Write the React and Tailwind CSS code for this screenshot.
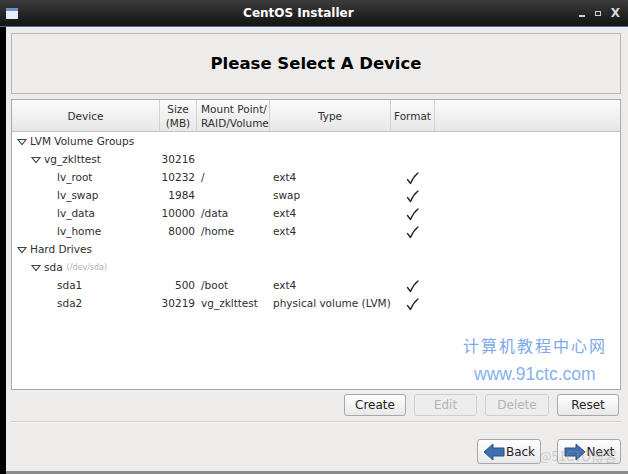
import React from "react";

const font = { fontFamily: '"DejaVu Sans", Verdana, sans-serif' };

const rows = [
    { level: 0, arrow: true, name: "LVM Volume Groups" },
    { level: 1, arrow: true, name: "vg_zklttest", size: "30216" },
    { level: 2, name: "lv_root", size: "10232", mount: "/", type: "ext4", fmt: true },
    { level: 2, name: "lv_swap", size: "1984", mount: "", type: "swap", fmt: true },
    { level: 2, name: "lv_data", size: "10000", mount: "/data", type: "ext4", fmt: true },
    { level: 2, name: "lv_home", size: "8000", mount: "/home", type: "ext4", fmt: true },
    { level: 0, arrow: true, name: "Hard Drives" },
    { level: 1, arrow: true, name: "sda", sub: "(/dev/sda)" },
    { level: 2, name: "sda1", size: "500", mount: "/boot", type: "ext4", fmt: true },
    { level: 2, name: "sda2", size: "30219", mount: "vg_zklttest", type: "physical volume (LVM)", fmt: true },
];

const indent = ["pl-[5px]", "pl-[19px]", "pl-[45px]"];

function Arrow() {
    return (
        <svg width="10" height="8" viewBox="0 0 10 8" className="mr-[3px] shrink-0">
            <path d="M1 1.5 L9 1.5 L5 6.5 Z" fill="none" stroke="#444" strokeWidth="1.1" />
        </svg>
    );
}

function Check() {
    return (
        <svg width="13" height="13" viewBox="0 0 13 13">
            <path d="M1.5 7.5 L4.5 11.5 Q7 5 12 1" fill="none" stroke="#1c2035" strokeWidth="1.3" strokeLinecap="round" strokeLinejoin="round" />
        </svg>
    );
}

function Button({ children, disabled, className = "" }) {
    return (
        <div
            className={`flex items-center justify-center rounded-[3px] border text-[12px] ${
                disabled
                    ? "border-[#cfcfcf] bg-[#ededed] text-[#b4b4b4]"
                    : "border-[#a8a8a8] bg-gradient-to-b from-[#ffffff] to-[#e8e8e8] text-[#222]"
            } ${className}`}
        >
            {children}
        </div>
    );
}

function NavArrow({ dir }) {
    return (
        <svg width="22" height="18" viewBox="0 0 22 18" className="mr-[1px]">
            <path
                d={dir === "left" ? "M1 9 L10 1 L10 5 L21 5 L21 13 L10 13 L10 17 Z" : "M21 9 L12 1 L12 5 L1 5 L1 13 L12 13 L12 17 Z"}
                fill="#3f6fae"
                stroke="#2a4f85"
                strokeWidth="1"
            />
        </svg>
    );
}

export default function App() {
    return (
        <div className="w-[628px] h-[474px] bg-black flex flex-col overflow-hidden" style={font}>
            {/* Title bar */}
            <div className="h-[27px] flex items-center bg-gradient-to-b from-[#3c3c3c] to-[#141414] border-b border-[#4a6c9a] px-[6px]">
                <div className="w-[12px] h-[11px] bg-[#e8eef8] border-t-[3px] border-[#6f8fc5]"></div>
                <div className="flex-1 text-center text-white font-bold text-[12px]">CentOS Installer</div>
                <div className="flex items-center gap-[10px] text-[#dcdcdc] pr-[2px]">
                    <span className="w-[6px] h-[2px] bg-[#cfcfcf] mt-[5px]"></span>
                    <span className="w-[6px] h-[5px] border border-[#cfcfcf]"></span>
                    <span className="font-bold text-[12px]">X</span>
                </div>
            </div>

            {/* Window body */}
            <div className="flex-1 ml-[6px] bg-[#edeceb] pl-[5px] pr-[7px] pt-[6px] flex flex-col border-b-[3px] border-[#8a8a8a]">
                <div className="h-[61px] border border-[#b5b5b5] flex items-center justify-center">
                    <span className="text-[16.5px] font-bold text-black mt-[2px]">Please Select A Device</span>
                </div>

                <div className="mt-[5px] h-[291px] border border-[#a9a9a9] bg-white relative text-[10.5px] text-[#2e2e2e]">
                    <div className="h-[32px] flex bg-gradient-to-b from-[#fbfbfb] to-[#e7e7e7] border-b border-[#c4c4c4] leading-[14px]">
                        <div className="w-[148px] flex items-center justify-center border-r border-[#d2d2d2]">Device</div>
                        <div className="w-[37px] flex items-center justify-center text-center border-r border-[#d2d2d2]">Size<br />(MB)</div>
                        <div className="w-[73px] flex items-center pl-[4px] border-r border-[#d2d2d2]">Mount Point/<br />RAID/Volume</div>
                        <div className="w-[121px] flex items-center justify-center border-r border-[#d2d2d2]">Type</div>
                        <div className="w-[44px] flex items-center justify-center border-r border-[#d2d2d2]">Format</div>
                    </div>
                    <div className="flex flex-col pt-[1px]">
                        {rows.map((r, i) => (
                            <div key={i} className="h-[18px] flex items-center">
                                <div className={`w-[148px] flex items-center ${indent[r.level]} whitespace-nowrap`}>
                                    {r.arrow && <Arrow />}
                                    <span>{r.name}</span>
                                    {r.sub && <span className="ml-[4px] text-[8px] text-[#b0b0b0]">{r.sub}</span>}
                                </div>
                                <div className="w-[35px] text-right">{r.size}</div>
                                <div className="w-[77px] pl-[6px] whitespace-nowrap">{r.mount}</div>
                                <div className="w-[134px] pl-[1px] whitespace-nowrap">{r.type}</div>
                                <div className="w-[30px] flex items-center">{r.fmt && <Check />}</div>
                            </div>
                        ))}
                    </div>
                    <div className="absolute left-[451px] top-[233px] text-[16px] tracking-[2px] text-[#7ea8ea]" style={{ fontFamily: '"Noto Sans CJK SC", serif' }}>
                        计算机教程中心网
                    </div>
                    <div className="absolute left-[462px] top-[261px] text-[17.5px] text-[#86b0f0]" style={{ fontFamily: '"Liberation Sans", sans-serif' }}>
                        www.91ctc.com
                    </div>
                </div>

                <div className="mt-[4px] flex justify-end gap-[8px]">
                    <Button className="w-[62px] h-[22px]">Create</Button>
                    <Button disabled className="w-[63px] h-[22px]">Edit</Button>
                    <Button disabled className="w-[64px] h-[22px]">Delete</Button>
                    <Button className="w-[62px] h-[22px] mr-[2px]">Reset</Button>
                </div>

                <div className="mt-[5px] h-[2px] border-t border-[#cfcfcf] border-b border-b-[#fafafa]"></div>

                <div className="mt-[16px] flex justify-end gap-[16px] relative">
                    <Button className="w-[64px] h-[25px]">
                        <NavArrow dir="left" />Back
                    </Button>
                    <Button className="w-[64px] h-[25px] border-[#7f9cc4]">
                        <NavArrow dir="right" />Next
                    </Button>
                    <div className="absolute right-[4px] top-[7px] text-[13px] text-[#9a9a9a] opacity-40" style={{ fontFamily: '"Noto Sans CJK SC", sans-serif' }}>
                        @51CTO博客
                    </div>
                </div>
            </div>
        </div>
    );
}
